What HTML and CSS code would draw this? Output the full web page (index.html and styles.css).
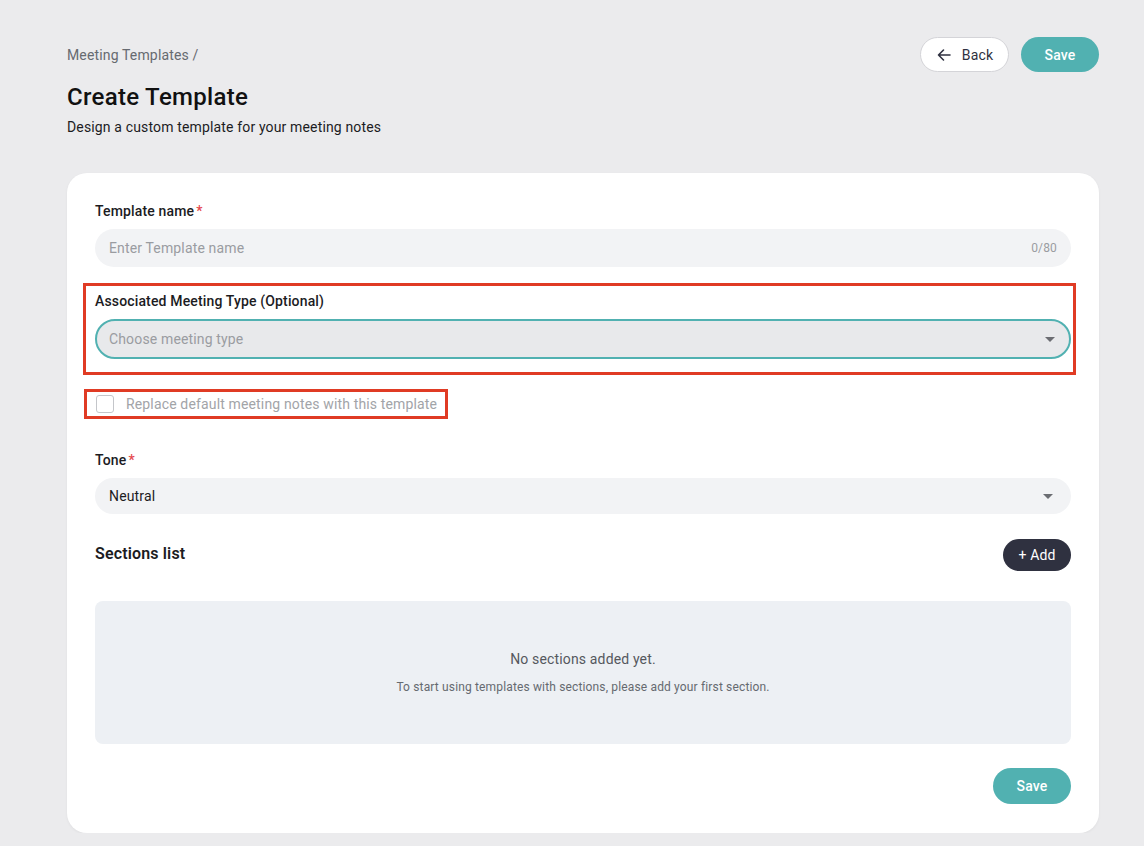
FILE: index.html
```html
<!DOCTYPE html>
<html lang="en">
<head>
    <meta charset="UTF-8">
    <title>Create Template</title>
    <link rel="stylesheet" href="styles.css">
</head>
<body>
    <div class="page">
        <div class="header">
            <div class="header-text">
                <div class="breadcrumb">Meeting Templates /</div>
                <h1>Create Template</h1>
                <p class="subtitle">Design a custom template for your meeting notes</p>
            </div>
            <div class="header-actions">
                <button class="btn btn-outline">
                    <svg width="16" height="16" viewBox="0 0 16 16" fill="none" stroke="#2f3140" stroke-width="1.6" stroke-linecap="round" stroke-linejoin="round"><path d="M14 8H2.5M7.5 3L2.5 8l5 5"/></svg>
                    Back
                </button>
                <button class="btn btn-primary">Save</button>
            </div>
        </div>

        <div class="card">
            <div class="field">
                <label class="label">Template name<span class="req">*</span></label>
                <div class="input">
                    <span class="placeholder">Enter Template name</span>
                    <span class="counter">0/80</span>
                </div>
            </div>

            <div class="field highlight highlight-wide">
                <label class="label">Associated Meeting Type (Optional)</label>
                <div class="input select focused">
                    <span class="placeholder">Choose meeting type</span>
                    <span class="caret"></span>
                </div>
            </div>

            <div class="highlight check-row">
                <span class="checkbox"></span>
                <span class="check-label">Replace default meeting notes with this template</span>
            </div>

            <div class="field tone">
                <label class="label">Tone<span class="req">*</span></label>
                <div class="input select short">
                    <span class="value">Neutral</span>
                    <span class="caret"></span>
                </div>
            </div>

            <div class="sections-head">
                <h2>Sections list</h2>
                <button class="btn btn-dark">+ Add</button>
            </div>

            <div class="empty">
                <div class="empty-title">No sections added yet.</div>
                <div class="empty-sub">To start using templates with sections, please add your first section.</div>
            </div>

            <div class="card-footer">
                <button class="btn btn-primary btn-tall">Save</button>
            </div>
        </div>
    </div>
</body>
</html>
```

FILE: styles.css
```css
body {
    margin: 0;
    background-color: #ebebed;
    font-family: Roboto, "Noto Sans", Arial, sans-serif;
    color: #1c1c1f;
    letter-spacing: 0.15px;
}
.page {
    width: 1032px;
    margin-left: 67px;
    padding-top: 37px;
}
.header {
    display: flex;
    justify-content: space-between;
    align-items: flex-start;
}
.breadcrumb {
    font-size: 14px;
    line-height: 20px;
    color: #666a70;
    margin-top: 8px;
}
h1 {
    font-size: 24px;
    font-weight: 500;
    line-height: 30px;
    margin: 17px 0 0;
    color: #111;
    letter-spacing: 0.3px;
}
.subtitle {
    font-size: 14px;
    line-height: 20px;
    margin: 5px 0 0;
    color: #1c1c1f;
}
.header-actions {
    display: flex;
    gap: 12px;
}
.btn {
    font-family: inherit;
    font-size: 14px;
    letter-spacing: 0.15px;
    border-radius: 999px;
    cursor: pointer;
    display: inline-flex;
    align-items: center;
    justify-content: center;
}
.btn-outline {
    height: 35px;
    width: 89px;
    background: #fff;
    border: 1px solid #d4d4d8;
    color: #2f3140;
    gap: 10px;
    padding: 0;
}
.btn-primary {
    height: 35px;
    width: 78px;
    background: #51b1b1;
    border: none;
    color: #fff;
    font-weight: 500;
}
.btn-tall {
    height: 36px;
}
.btn-dark {
    height: 32px;
    width: 68px;
    background: #2f3140;
    border: none;
    color: #fff;
}
.card {
    margin-top: 36px;
    background: #fff;
    border-radius: 20px;
    padding: 28px 28px 29px;
    box-shadow: 0 1px 3px rgba(0, 0, 0, 0.05);
}
.field {
    display: flex;
    flex-direction: column;
    gap: 8px;
}
.label {
    font-size: 14px;
    line-height: 20px;
    font-weight: 500;
    color: #1c1c1f;
}
.req {
    color: #e5484d;
    margin-left: 2px;
}
.input {
    height: 38px;
    border-radius: 19px;
    background: #f2f3f5;
    display: flex;
    align-items: center;
    justify-content: space-between;
    padding: 0 14px;
    font-size: 14px;
    box-sizing: border-box;
}
.placeholder {
    color: #9a9ca1;
}
.counter {
    font-size: 12px;
    color: #9a9ca1;
}
.value {
    color: #1c1c1f;
}
.select.focused {
    height: 40px;
    border: 2px solid #51b1b1;
    border-radius: 20px;
    background: #e8e9eb;
    padding: 0 12px 0 12px;
}
.select.short {
    height: 36px;
    padding-right: 16px;
}
.caret {
    width: 0;
    height: 0;
    border-left: 5px solid transparent;
    border-right: 5px solid transparent;
    border-top: 5px solid #6b6d72;
    margin-right: 2px;
}
.highlight {
    border: 3px solid #e03b24;
}
.highlight-wide {
    margin: 16px -5px 0 -12px;
    padding: 5px 2px 13px 9px;
}
.check-row {
    display: inline-flex;
    align-items: center;
    gap: 12px;
    margin: 14px 0 0 -11px;
    padding: 0 8px 0 9px;
    height: 30px;
    box-sizing: border-box;
}
.checkbox {
    width: 18px;
    height: 18px;
    box-sizing: border-box;
    border: 1.5px solid #c4c6ca;
    border-radius: 3px;
}
.check-label {
    font-size: 14px;
    color: #a2a4a8;
    letter-spacing: 0.15px;
}
.tone {
    margin-top: 31px;
}
.sections-head {
    display: flex;
    justify-content: space-between;
    align-items: center;
    margin-top: 25px;
}
h2 {
    font-size: 16px;
    font-weight: 600;
    line-height: 20px;
    margin: 0 0 3px;
    color: #1c1c1f;
}
.empty {
    margin-top: 30px;
    height: 143px;
    background: #edf0f4;
    border-radius: 8px;
    display: flex;
    flex-direction: column;
    align-items: center;
    justify-content: center;
    gap: 13px;
}
.empty-title {
    font-size: 14px;
    color: #55585e;
}
.empty-sub {
    font-size: 12px;
    color: #666a70;
}
.card-footer {
    display: flex;
    justify-content: flex-end;
    margin-top: 24px;
}
```
